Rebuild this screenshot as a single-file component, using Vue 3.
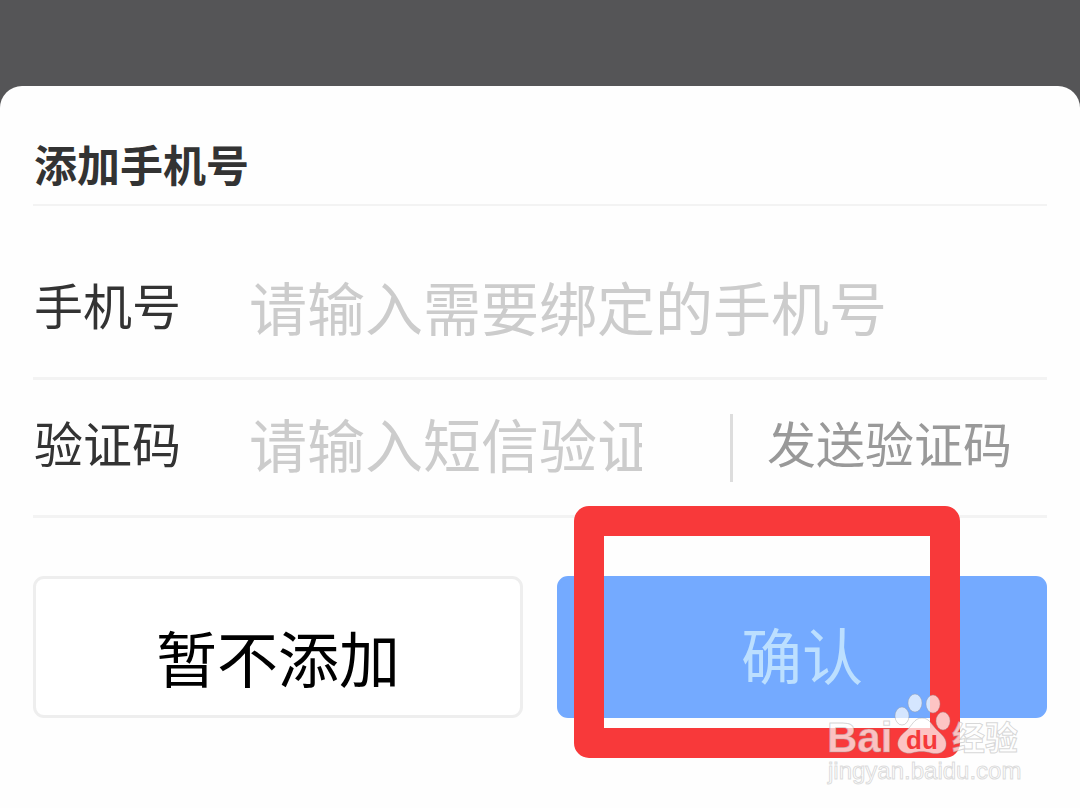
<script setup>
import { ref } from 'vue'

const phone = ref('')
const code = ref('')
</script>

<template>
  <div class="page">
    <form class="sheet" @submit.prevent>
      <h1 class="title">添加手机号</h1>

      <div class="row row-phone">
        <label class="label" for="phone">手机号</label>
        <input id="phone" v-model="phone" class="field" type="tel" placeholder="请输入需要绑定的手机号" />
      </div>

      <div class="row row-code">
        <label class="label" for="code">验证码</label>
        <input id="code" v-model="code" class="field" type="text" placeholder="请输入短信验证码" />
        <button class="send" type="button">发送验证码</button>
      </div>

      <div class="actions">
        <button class="btn cancel" type="button">暂不添加</button>
        <div class="confirm-cell">
          <button class="btn confirm" type="submit">确认</button>
          <div class="highlight"></div>
        </div>
      </div>
    </form>

    <svg class="watermark" viewBox="0 0 204 104" width="204" height="104" aria-hidden="true">
      <g class="mark">
        <text class="brand" x="3" y="64">Bai</text>
        <ellipse cx="78" cy="28" rx="7" ry="9" />
        <ellipse cx="91" cy="15" rx="7" ry="9" />
        <ellipse cx="109" cy="16" rx="7" ry="9" />
        <ellipse cx="119" cy="33" rx="7" ry="9" />
        <path d="M98 30C90 30 88 38 82 43C76 48 73 52 74 58C76 64 82 66 88 65C94 63 101 63 107 65C115 67 121 64 122 58C123 51 119 48 114 43C108 38 106 30 98 30Z" />
        <text class="brand-cn" x="128" y="62">经验</text>
      </g>
      <text class="du" x="82" y="61">du</text>
      <text class="site" x="4" y="91">jingyan.baidu.com</text>
    </svg>
  </div>
</template>

<style>
body {
  background: #555557;
}
</style>

<style scoped>
.page {
  position: relative;
  box-sizing: border-box;
  min-height: 100vh;
  padding-top: 86px;
  display: flex;
  flex-direction: column;
  overflow: hidden;
  background: #555557;
  font-family: "Liberation Sans", "Noto Sans CJK SC", sans-serif;
}

.sheet {
  flex: 1;
  padding: 50px 33px 48px;
  border-radius: 22px 22px 0 0;
  background: #fefefe;
}

.title {
  margin: 0;
  padding-left: 1px;
  height: 68px;
  border-bottom: 2px solid #f3f3f3;
  color: #333;
  font-size: 43px;
  font-weight: 700;
  line-height: 62px;
}

.row {
  display: flex;
  align-items: center;
  box-sizing: border-box;
  padding-left: 1px;
  border-bottom: 3px solid #f3f3f3;
}

.row-phone {
  height: 174px;
  padding-top: 37px;
}

.row-code {
  height: 138px;
  padding-right: 35px;
}

.label {
  flex: none;
  width: 215px;
  padding-bottom: 4px;
  color: #333;
  font-size: 49px;
  line-height: 72px;
}

.field {
  flex: 1;
  min-width: 0;
  height: 86px;
  padding: 0;
  border: 0;
  outline: 0;
  background: transparent;
  color: #333;
  font-family: inherit;
  font-size: 58px;
}

.field::placeholder {
  color: #ccc;
  opacity: 1;
}

.row-code .field {
  margin-right: 88px;
}

.send {
  flex: none;
  height: 68px;
  padding: 0 0 4px 34px;
  border: 0;
  border-left: 3px solid #ddd;
  background: transparent;
  color: #999;
  font-family: inherit;
  font-size: 49px;
  line-height: 60px;
}

.actions {
  display: grid;
  grid-template-columns: 1fr 1fr;
  gap: 34px;
  margin-top: 58px;
}

.confirm-cell {
  position: relative;
}

.btn {
  display: block;
  box-sizing: border-box;
  width: 100%;
  height: 142px;
  border: 3px solid #eee;
  border-radius: 11px;
  font-family: inherit;
  font-size: 61px;
  line-height: 88px;
}

.cancel {
  padding: 30px 0 0;
  background: #fff;
  color: #000;
}

.confirm {
  padding: 24px 0 0;
  border-color: #74aaff;
  background: #74aaff;
  color: #bcdfff;
}

.highlight {
  position: absolute;
  top: -70px;
  right: 87px;
  bottom: -40px;
  left: 17px;
  border: 30px solid #f8393a;
  border-radius: 15px;
  pointer-events: none;
}

.watermark {
  position: absolute;
  right: 52px;
  bottom: 16px;
  pointer-events: none;
}

.mark {
  fill: #fff;
  fill-opacity: 0.7;
  stroke: #999;
  stroke-opacity: 0.4;
  stroke-width: 1px;
}

.brand {
  font-size: 42px;
  font-weight: 700;
}

.brand-cn {
  font-size: 33px;
  font-weight: 700;
}

.du {
  fill: #f5393a;
  font-size: 26px;
  font-weight: 700;
}

.site {
  fill: #fff;
  fill-opacity: 0.8;
  stroke: #999;
  stroke-opacity: 0.35;
  stroke-width: 1px;
  font-size: 24px;
}
</style>
